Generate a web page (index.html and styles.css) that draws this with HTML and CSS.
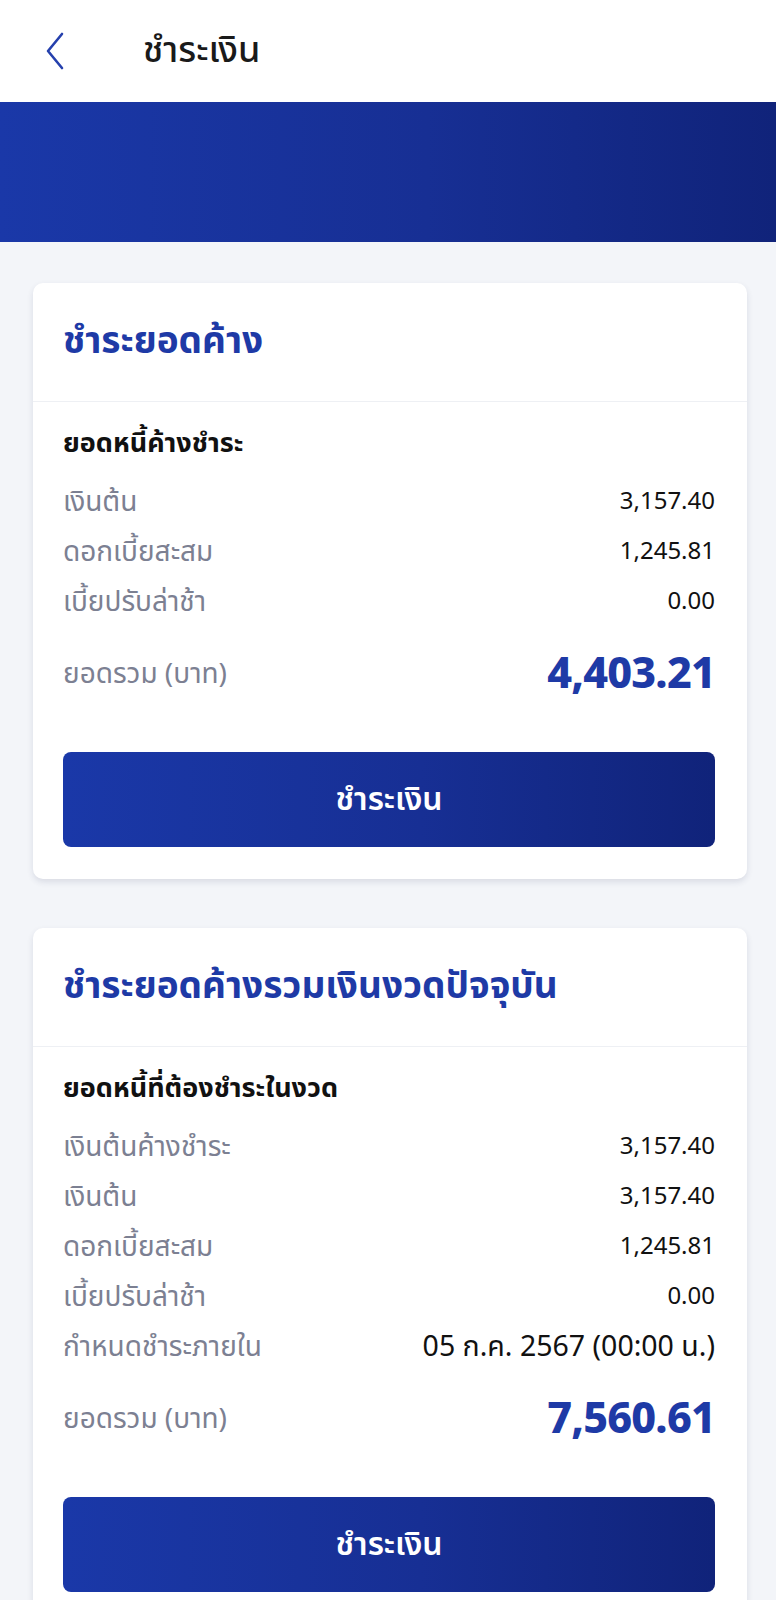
FILE: index.html
```html
<!DOCTYPE html>
<html lang="th">
<head>
<meta charset="utf-8">
<title>ชำระเงิน</title>
<link rel="stylesheet" href="styles.css">
</head>
<body>
<header class="topbar">
  <span class="back">
    <svg width="22" height="38" viewBox="0 0 22 38"><path d="M18 2 L4 19 L18 36" fill="none" stroke="#2540ad" stroke-width="2.6" stroke-linecap="round" stroke-linejoin="round"/></svg>
  </span>
  <h1 class="title">ชำระเงิน</h1>
</header>
<div class="band"></div>
<main class="content">
  <section class="card">
    <div class="card-head">ชำระยอดค้าง</div>
    <div class="card-body">
      <div class="subhead">ยอดหนี้ค้างชำระ</div>
      <div class="row"><span class="label">เงินต้น</span><span class="value">3,157.40</span></div>
      <div class="row"><span class="label">ดอกเบี้ยสะสม</span><span class="value">1,245.81</span></div>
      <div class="row"><span class="label">เบี้ยปรับล่าช้า</span><span class="value">0.00</span></div>
      <div class="row total"><span class="label">ยอดรวม (บาท)</span><span class="amount">4,403.21</span></div>
      <button class="pay">ชำระเงิน</button>
    </div>
  </section>
  <section class="card">
    <div class="card-head">ชำระยอดค้างรวมเงินงวดปัจจุบัน</div>
    <div class="card-body">
      <div class="subhead">ยอดหนี้ที่ต้องชำระในงวด</div>
      <div class="row"><span class="label">เงินต้นค้างชำระ</span><span class="value">3,157.40</span></div>
      <div class="row"><span class="label">เงินต้น</span><span class="value">3,157.40</span></div>
      <div class="row"><span class="label">ดอกเบี้ยสะสม</span><span class="value">1,245.81</span></div>
      <div class="row"><span class="label">เบี้ยปรับล่าช้า</span><span class="value">0.00</span></div>
      <div class="row"><span class="label">กำหนดชำระภายใน</span><span class="value date">05 ก.ค. 2567 (00:00 น.)</span></div>
      <div class="row total"><span class="label">ยอดรวม (บาท)</span><span class="amount">7,560.61</span></div>
      <button class="pay">ชำระเงิน</button>
    </div>
  </section>
</main>
</body>
</html>
```
FILE: styles.css
```css
* { box-sizing: border-box; }
html, body { margin: 0; padding: 0; }
body {
  background: #f3f5f9;
  font-family: "Noto Sans Thai", "Noto Sans", "Liberation Sans", sans-serif;
  color: #111;
}
.topbar {
  height: 102px;
  background: #fff;
  display: flex;
  align-items: center;
  padding-left: 44px;
}
.back { display: flex; width: 22px; height: 38px; margin-right: 77px; }
.title {
  margin: 0;
  font-size: 36px;
  font-weight: 500;
  color: #1a1a1a;
}
.band {
  height: 140px;
  background: linear-gradient(90deg, #1a38a8 0%, #172f94 55%, #10237a 100%);
}
.content {
  padding: 41px 29px 0 33px;
  display: flex;
  flex-direction: column;
  gap: 49px;
}
.card {
  background: #fff;
  border-radius: 10px;
  box-shadow: 0 3px 6px rgba(30, 40, 80, 0.12);
  overflow: hidden;
}
.card-head {
  height: 119px;
  display: flex;
  align-items: center;
  padding: 0 30px;
  font-size: 37px;
  font-weight: 700;
  color: #1e3aa6;
  border-bottom: 1px solid #eef0f4;
}
.card-body {
  padding: 18px 32px 32px 30px;
}
.subhead {
  font-size: 27px;
  font-weight: 700;
  color: #111;
  height: 46px;
  display: flex;
  align-items: center;
  margin-bottom: 11px;
}
.row {
  display: flex;
  justify-content: space-between;
  align-items: center;
  height: 50px;
}
.label {
  font-size: 28px;
  color: #7c8092;
}
.value {
  font-size: 24px;
  color: #111;
}
.value.date { font-size: 28.5px; }
.row.total {
  height: 72px;
  margin-top: 11px;
}
.amount {
  font-size: 43px;
  font-weight: 800;
  color: #1e3aa6;
  letter-spacing: -0.8px;
}
.pay {
  display: block;
  width: 100%;
  height: 95px;
  margin-top: 42px;
  border: none;
  border-radius: 8px;
  background: linear-gradient(90deg, #1a38a8 0%, #172f94 55%, #10237a 100%);
  color: #fff;
  font-family: inherit;
  font-size: 32px;
  font-weight: 600;
}
```
